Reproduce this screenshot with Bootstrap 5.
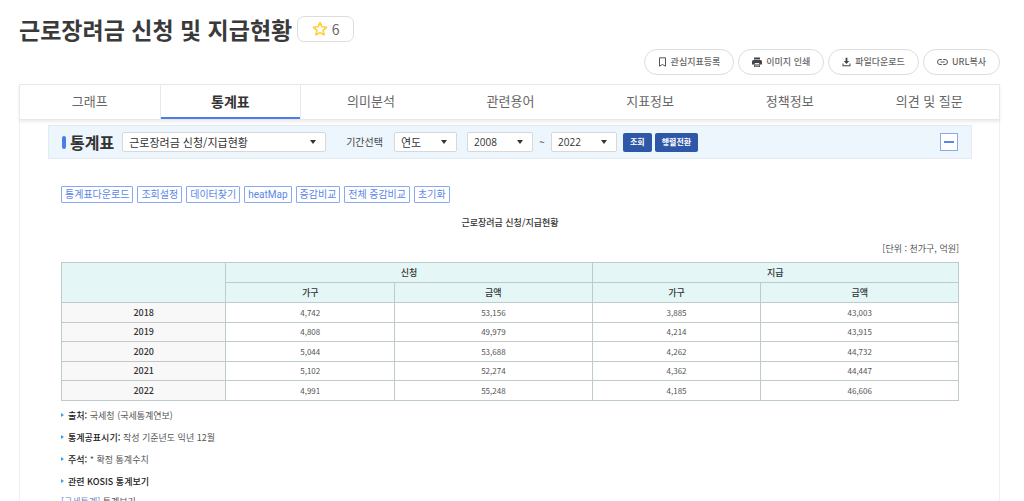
<!DOCTYPE html>
<html lang="ko">
<head>
<meta charset="utf-8">
<meta name="viewport" content="width=device-width, initial-scale=1">
<title>근로장려금 신청 및 지급현황</title>
<link href="https://cdn.jsdelivr.net/npm/bootstrap@5.3.0/dist/css/bootstrap.min.css" rel="stylesheet">
<style>
  body { font-family: "Noto Sans CJK KR", sans-serif; font-size: 9px; line-height: 14px; color: #555; background: #fff; }
  .page { padding: 16px 24px 0 19px; }
  .page-title { font-size: 23px; line-height: 27px; font-weight: 700; color: #3a3a3a; }
  .star-btn { height: 26px; width: 57px; margin-left: 5px; font-size: 14px; line-height: 16px; color: #666; border: 1px solid #ddd; border-radius: 7px; background: #fff; }
  .actions { margin-top: 6px; }
  .pill { height: 26px; padding: 0 13px; font-size: 9px; line-height: 14px; font-weight: 500; color: #666; border: 1px solid #ddd; border-radius: 13px; background: #fff; }
  .tabs { margin-top: 9px; border: 1px solid #e8e8e8; box-shadow: 0 2px 3px rgba(0,0,0,.08); position: relative; }
  .tabs .nav-link { height: 34px; padding: 0; font-size: 13px; line-height: 32px; color: #666; border-radius: 0; }
  .tabs .nav-link.active { font-size: 14px; font-weight: 700; color: #333; border: solid #e8e8e8; border-width: 0 1px; box-shadow: inset 0 -2px #4a7de8; }
  .panel { padding: 5px 27px 0 28px; border: solid #f0f0f0; border-width: 0 1px; }
  .filter { padding: 0 13px; height: 34px; background: #edf6fc; border: 1px solid #e3ebf0; }
  .filter h2 { font-size: 16px; line-height: 20px; font-weight: 700; color: #333; }
  .filter h2 label { font-size: 16px; line-height: 20px; color: #333; }
  .bar-mark { width: 4px; height: 13px; border-radius: 2px; background: #4a7de8; margin-right: 4px; }
  .filter .form-select { height: 20px; padding: 0 20px 0 6px; font-size: 11px; line-height: 18px; color: #333; border: 1px solid #d8d8d8; border-radius: 2px;
    background: #fff url("data:image/svg+xml,%3Csvg xmlns='http://www.w3.org/2000/svg' viewBox='0 0 6 4'%3E%3Cpath d='M0 0h6L3 4z' fill='%23333'/%3E%3C/svg%3E") no-repeat right 9px center / 6px 4px; }
  .filter .form-select.number { font-family: "Open Sans", sans-serif; font-size: 10px; }
  .pick-item { flex: 0 1 204px; }
  .pick-unit { flex: 0 0 63px; margin-right: 10px; }
  .pick-year { flex: 0 0 66px; }
  .filter label, .tilde { font-size: 10px; color: #444; }
  .period-label { margin: 0 11px 0 20px; }
  .tilde { flex: 0 0 18px; text-align: center; }
  .solid-btn { height: 19px; padding: 0 7px; font-size: 8px; line-height: 14px; font-weight: 700; color: #fff; background: #2f57a8; border: 0; border-radius: 2px; }
  .solid-btns { margin-left: 6px; gap: 3px; }
  .fold-btn { width: 18px; height: 18px; padding: 0; background: #fff; border: 1px solid #88a8ef; }
  .content-area { padding: 27px 13px 0; }
  .tool-btn { height: 17px; padding: 0 3px; font-family: Roboto, "Noto Sans CJK KR", sans-serif; font-size: 10px; line-height: 14px; color: #5c86e6; background: #fff; border: 1px solid #88a8ef; border-radius: 1px; }
  .table-title { margin-top: 13px; font-weight: 500; color: #333; text-align: center; }
  .unit { margin-top: 12px; text-align: right; }
  .stat { width: 100%; margin-top: 6px; table-layout: fixed; border-collapse: collapse; font-size: 8px; line-height: 12px; text-align: center; }
  .stat th, .stat td { height: 20px; padding: 0; border: 1px solid #bfcbcb; }
  .stat tr:nth-child(2n) td, .stat tbody tr:nth-child(2n) th { height: 19px; }
  .stat thead th { background: #e4f6f6; color: #333; font-size: 9px; font-weight: 500; }
  .stat tbody th { background: #f8f8f8; color: #333; font-size: 9px; font-weight: 500; }
  .col-year { width: 18.3%; } .col-count { width: 18.8%; } .col-sum { width: 22%; }
  .notes { margin: 8px 0 0; padding: 0; list-style: none; }
  .notes li { margin-bottom: 8px; padding-left: 7px; }
  .notes li:last-child { margin-bottom: 6px; }
  .notes li::before { content: ""; float: left; margin: 4px 0 0 -7px; border: 2px solid transparent; border-left: 3px solid #3a9fe8; border-right: 0; }
  .notes strong { font-weight: 500; color: #222; }
  .kosis a { color: #6c89c9; text-decoration: none; }
</style>
<script src="https://cdn.jsdelivr.net/npm/bootstrap@5.3.0/dist/js/bootstrap.bundle.min.js"></script>
</head>
<body>
<main class="page">
  <header>
    <div class="d-flex align-items-start">
      <h1 class="page-title mb-0">근로장려금 신청 및 지급현황</h1>
      <button type="button" class="star-btn d-flex align-items-center justify-content-center gap-1" aria-label="즐겨찾기 6">
        <svg width="16" height="16" viewBox="0 0 16 16" fill="none" stroke="#fc3" stroke-width="1.600" stroke-linejoin="round"><path d="M8 1.600l1.900 4.200 4.600.5-3.400 3.100.9 4.500L8 11.600l-4 2.300.9-4.500L1.500 6.300l4.600-.5z"/></svg>
        <span>6</span>
      </button>
    </div>
    <div class="actions d-flex justify-content-end gap-1">
      <button type="button" class="pill d-flex align-items-center gap-1"><svg width="9" height="10" viewBox="0 0 9 10" fill="none" stroke="#555"><path d="M1.500.8h6v8.400L4.500 7.500l-3 1.700z"/></svg>관심지표등록</button>
      <button type="button" class="pill d-flex align-items-center gap-1"><svg width="10" height="10" viewBox="0 0 10 10" fill="#444"><path d="M2 .5h6v2H2zM1.500 3h7Q10 3 10 4.500v3H8V6H2v1.500H0v-3Q0 3 1.500 3zM2 6h.8v3.200h4.400V6H8v4H2z"/><path d="M2.800 6.800h4.400v2.400H2.800z" fill="#999"/></svg>이미지 인쇄</button>
      <button type="button" class="pill d-flex align-items-center gap-1"><svg width="9" height="10" viewBox="0 0 9 10" fill="#444"><path d="M3.600.8h1.800V4h1.900L4.500 7 1.700 4h1.900zM.5 6.500h1v1.700h6V6.500h1v2.800h-8z"/></svg>파일다운로드</button>
      <button type="button" class="pill d-flex align-items-center gap-1"><svg width="11" height="8" viewBox="0 0 11 8" fill="none" stroke="#555"><path d="M4.800 1.500H3a2.500 2.500 0 0 0 0 5h1.800M6.200 1.500H8a2.500 2.500 0 0 1 0 5H6.200M3.500 4h4"/></svg>URL복사</button>
    </div>
  </header>

  <nav class="tabs nav nav-fill nav-justified">
    <a class="nav-link" href="#">그래프</a>
    <a class="nav-link active" aria-current="page" href="#">통계표</a>
    <a class="nav-link" href="#">의미분석</a>
    <a class="nav-link" href="#">관련용어</a>
    <a class="nav-link" href="#">지표정보</a>
    <a class="nav-link" href="#">정책정보</a>
    <a class="nav-link" href="#">의견 및 질문</a>
  </nav>

  <section class="panel">
    <form class="filter d-flex align-items-center">
      <span class="bar-mark"></span>
      <h2 class="mb-0 me-2"><label for="item">통계표</label></h2>
      <select class="form-select pick-item" id="item"><option>근로장려금 신청/지급현황</option></select>
      <label class="period-label" for="unit">기간선택</label>
      <select class="form-select pick-unit" id="unit"><option>연도</option></select>
      <select class="form-select number pick-year" id="from" aria-label="시작 연도"><option>2008</option></select>
      <span class="tilde">~</span>
      <select class="form-select number pick-year" id="to" aria-label="끝 연도"><option>2022</option></select>
      <div class="solid-btns d-flex">
        <button type="button" class="solid-btn">조회</button>
        <button type="button" class="solid-btn">행렬전환</button>
      </div>
      <button type="button" class="fold-btn d-flex align-items-center justify-content-center ms-auto" aria-label="접기"><svg width="10" height="2" viewBox="0 0 10 2"><path d="M0 0h10v2H0z" fill="#5c86e6"/></svg></button>
    </form>

    <div class="content-area">
      <div class="d-flex flex-wrap gap-1">
        <button type="button" class="tool-btn">통계표다운로드</button>
        <button type="button" class="tool-btn">조회설정</button>
        <button type="button" class="tool-btn">데이터찾기</button>
        <button type="button" class="tool-btn">heatMap</button>
        <button type="button" class="tool-btn">증감비교</button>
        <button type="button" class="tool-btn">전체 증감비교</button>
        <button type="button" class="tool-btn">초기화</button>
      </div>
      <div class="table-title">근로장려금 신청/지급현황</div>
      <div class="unit">[단위 : 천가구, 억원]</div>
      <table class="stat">
        <colgroup><col class="col-year"><col class="col-count"><col class="col-sum"><col class="col-count"><col class="col-sum"></colgroup>
        <thead>
          <tr><th rowspan="2"></th><th colspan="2">신청</th><th colspan="2">지급</th></tr>
          <tr><th>가구</th><th>금액</th><th>가구</th><th>금액</th></tr>
        </thead>
        <tbody>
          <tr><th>2018</th><td>4,742</td><td>53,156</td><td>3,885</td><td>43,003</td></tr>
          <tr><th>2019</th><td>4,808</td><td>49,979</td><td>4,214</td><td>43,915</td></tr>
          <tr><th>2020</th><td>5,044</td><td>53,688</td><td>4,262</td><td>44,732</td></tr>
          <tr><th>2021</th><td>5,102</td><td>52,274</td><td>4,362</td><td>44,447</td></tr>
          <tr><th>2022</th><td>4,991</td><td>55,248</td><td>4,185</td><td>46,606</td></tr>
        </tbody>
      </table>
      <ul class="notes">
        <li><strong>출처:</strong> 국세청 (국세통계연보)</li>
        <li><strong>통계공표시기:</strong> 작성 기준년도 익년 12월</li>
        <li><strong>주석:</strong> * 확정 통계수치</li>
        <li><strong>관련 KOSIS 통계보기</strong></li>
      </ul>
      <div class="kosis"><a href="#">[국세통계]</a> 통계보기</div>
    </div>
  </section>
</main>
</body>
</html>
